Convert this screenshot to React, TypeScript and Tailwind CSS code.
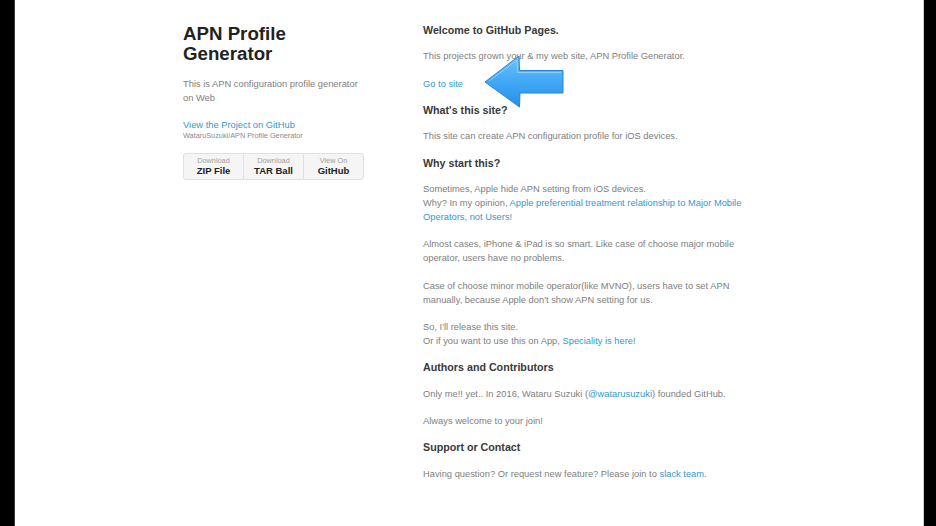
import React from 'react';

// --- ICONS ---
const BlueArrow = () => (
  <svg
    className="absolute left-[467px] top-[53px]"
    width="86"
    height="58"
    viewBox="482 53 86 58"
    xmlns="http://www.w3.org/2000/svg"
  >
    <defs>
      <linearGradient id="arrowFill" x1="0" y1="0" x2="0" y2="1">
        <stop offset="0%" stopColor="#6cc4fb" />
        <stop offset="55%" stopColor="#3da6f4" />
        <stop offset="100%" stopColor="#2a8fe6" />
      </linearGradient>
    </defs>
    <path
      d="M485 82 L519 56 L519.5 70.5 L563 70.5 L563 93 L520 93 L519.5 107 Z"
      fill="url(#arrowFill)"
      stroke="#2483d8"
      strokeWidth="1"
      strokeLinejoin="round"
    />
    <path d="M489 81 L517 60 L517.5 72.5 L561 72.5" fill="none" stroke="#a5dcff" strokeWidth="1" opacity="0.7" />
  </svg>
);

const DownloadButton = ({ small, label, last }: { small: string; label: string; last?: boolean }) => (
  <li className={`flex-1 flex flex-col items-center justify-center ${last ? '' : 'border-r border-[#e0e0e0]'}`}>
    <span className="text-[7.3px] leading-[8px] text-[#a0a0a0]">{small}</span>
    <strong className="text-[9.5px] leading-[11px] font-bold text-[#222]">{label}</strong>
  </li>
);

const Heading = ({ children }: { children: React.ReactNode }) => (
  <h3 className="text-[10.7px] leading-[12px] font-bold text-[#393939] mb-[13.33px]">{children}</h3>
);

const P = ({ children }: { children: React.ReactNode }) => (
  <p className="mb-[13.33px]">{children}</p>
);

const A = ({ children }: { children: React.ReactNode }) => (
  <a href="#" className="text-[#39c]">{children}</a>
);

export default function App() {
  return (
    <div
      className="flex h-screen w-full bg-black"
      style={{ fontFamily: '"Liberation Sans", Arial, sans-serif' }}
    >
      <div className="w-[14px] bg-black" />
      <div className="relative flex-1 bg-white border-r border-[#cfcfcf] border-l border-l-[#3a3a3a] text-[9.33px] leading-[14px] text-[#808080]">
        <div className="ml-[168px] flex w-[573px] pt-[24px]">
          {/* header */}
          <header className="w-[180px]">
            <h1 className="text-[18.7px] leading-[20px] font-bold text-[#222] mb-[13px]">
              APN Profile
              <br />
              Generator
            </h1>
            <p className="mb-[13px]">This is APN configuration profile generator on Web</p>
            <p className="mb-[14px]">
              <A>View the Project on GitHub</A>
              <small className="block text-[7.3px] leading-[7px] text-[#8a8a8a]">
                WataruSuzuki/APN Profile Generator
              </small>
            </p>
            <ul className="flex h-[27px] w-[181px] rounded-[3px] border border-[#e0e0e0] bg-[#f5f5f6]">
              <DownloadButton small="Download" label="ZIP File" />
              <DownloadButton small="Download" label="TAR Ball" />
              <DownloadButton small="View On" label="GitHub" last />
            </ul>
          </header>

          {/* section */}
          <section className="ml-[60px] w-[333px]">
            <Heading>Welcome to GitHub Pages.</Heading>
            <P>This projects grown your &amp; my web site, APN Profile Generator.</P>
            <P>
              <A>Go to site</A>
            </P>

            <Heading>What's this site?</Heading>
            <P>This site can create APN configuration profile for iOS devices.</P>

            <Heading>Why start this?</Heading>
            <P>
              Sometimes, Apple hide APN setting from iOS devices.
              <br />
              Why? In my opinion,{' '}
              <A>Apple preferential treatment relationship to Major Mobile Operators, not Users!</A>
            </P>
            <P>
              Almost cases, iPhone &amp; iPad is so smart. Like case of choose major mobile operator, users have no
              problems.
            </P>
            <P>
              Case of choose minor mobile operator(like MVNO), users have to set APN manually, because Apple don't
              show APN setting for us.
            </P>
            <P>
              So, I'll release this site.
              <br />
              Or if you want to use this on App, <A>Speciality is here!</A>
            </P>

            <Heading>Authors and Contributors</Heading>
            <P>
              Only me!! yet.. In 2016, Wataru Suzuki (<A>@watarusuzuki</A>) founded GitHub.
            </P>
            <P>Always welcome to your join!</P>

            <Heading>Support or Contact</Heading>
            <P>
              Having question? Or request new feature? Please join to <A>slack team</A>.
            </P>
          </section>
        </div>
        <BlueArrow />
      </div>
      <div className="w-[12px] bg-black" />
    </div>
  );
}
